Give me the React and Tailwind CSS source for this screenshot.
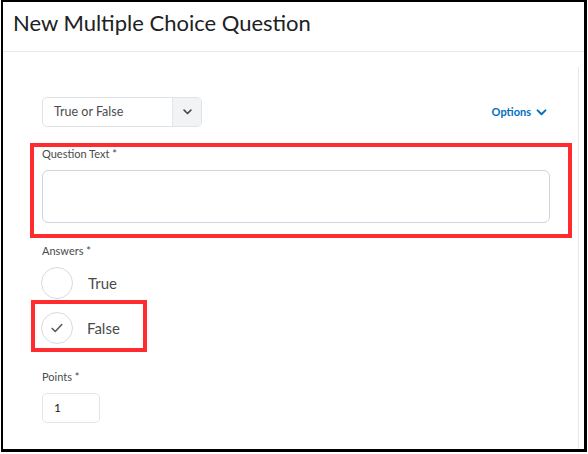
import React from 'react';

const font = { fontFamily: 'Lato, "Noto Sans", sans-serif' };

function ChevronDown({ className }) {
    return (
        <svg viewBox="0 0 12 8" className={className} fill="none" stroke="currentColor" strokeWidth="2.2" strokeLinecap="round" strokeLinejoin="round">
            <path d="M1.5 1.5 6 6l4.5-4.5" />
        </svg>
    );
}

function Radio({ checked }) {
    return (
        <div className="w-[32px] h-[32px] rounded-full border border-[#d6dbe3] bg-white flex items-center justify-center shrink-0">
            {checked && (
                <svg viewBox="0 0 16 16" className="w-[14px] h-[14px] text-[#565a5c]" fill="none" stroke="currentColor" strokeWidth="1.8" strokeLinecap="round" strokeLinejoin="round">
                    <path d="M2.5 8.5 6 12l7.5-8" />
                </svg>
            )}
        </div>
    );
}

export default function App() {
    return (
        <div className="w-[588px] h-[454px] bg-white" style={font}>
            <div className="ml-px w-[586px] h-[452px] border-l-2 border-t-2 border-r-[3px] border-b-[3px] border-black flex flex-col">
                {/* header */}
                <div className="h-[50px] border-b border-[#e6eaf0] pl-[10px] pt-[6px] shrink-0">
                    <h1 className="text-[22px] leading-[30px] text-[#202122]">New Multiple Choice Question</h1>
                </div>

                <div className="flex flex-1">
                    <div className="flex-1 flex flex-col">
                        {/* question type + options */}
                        <div className="mt-[45px] ml-[39px] w-[508px] flex items-center justify-between">
                            <div className="w-[160px] h-[30px] rounded-[5px] border border-[#dfe3ea] flex overflow-hidden">
                                <div className="flex-1 flex items-center pl-[11px] text-[12.5px] text-[#494c4e]">True or False</div>
                                <div className="w-[29px] bg-[#f1f3f5] border-l border-[#e3e6ea] flex items-center justify-center text-[#494c4e]">
                                    <ChevronDown className="w-[9px] h-[6px]" />
                                </div>
                            </div>
                            <div className="flex items-center gap-[5px] pr-[3px] text-[#006fbf] text-[11px] font-bold">
                                <span>Options</span>
                                <ChevronDown className="w-[11px] h-[7px]" />
                            </div>
                        </div>

                        {/* question text */}
                        <div className="mt-[16px] ml-[27px] w-[542px] h-[95px] border-4 border-[#ff2b2e] pl-[8px]">
                            <div className="text-[11px] leading-[14px] text-[#494c4e]">Question Text *</div>
                            <div className="mt-[9px] w-[508px] h-[53px] rounded-[6px] border border-[#cfd6df] bg-white"></div>
                        </div>

                        {/* answers */}
                        <div className="mt-[6px] ml-[39px] text-[11px] leading-[14px] text-[#494c4e]">Answers *</div>
                        <div className="mt-[9px] ml-[38px] flex items-center gap-[15px]">
                            <Radio />
                            <span className="text-[15px] text-[#494c4e]">True</span>
                        </div>
                        <div className="mt-[1px] ml-[28px] w-[116px] h-[52px] border-4 border-[#ff2b2e] pl-[6px] pt-[8px] flex items-start gap-[14px]">
                            <Radio checked />
                            <span className="text-[15px] leading-[32px] text-[#494c4e]">False</span>
                        </div>

                        {/* points */}
                        <div className="mt-[18px] ml-[39px] text-[11px] leading-[14px] text-[#494c4e]">Points *</div>
                        <div className="mt-[9px] ml-[39px] w-[58px] h-[30px] rounded-[5px] border border-[#e0e5eb] flex items-center pl-[11px] text-[12px] text-[#202122]">1</div>
                    </div>
                    <div className="mt-[15px] w-px bg-[#e3e7f0] mr-[5px]"></div>
                </div>
            </div>
        </div>
    );
}
